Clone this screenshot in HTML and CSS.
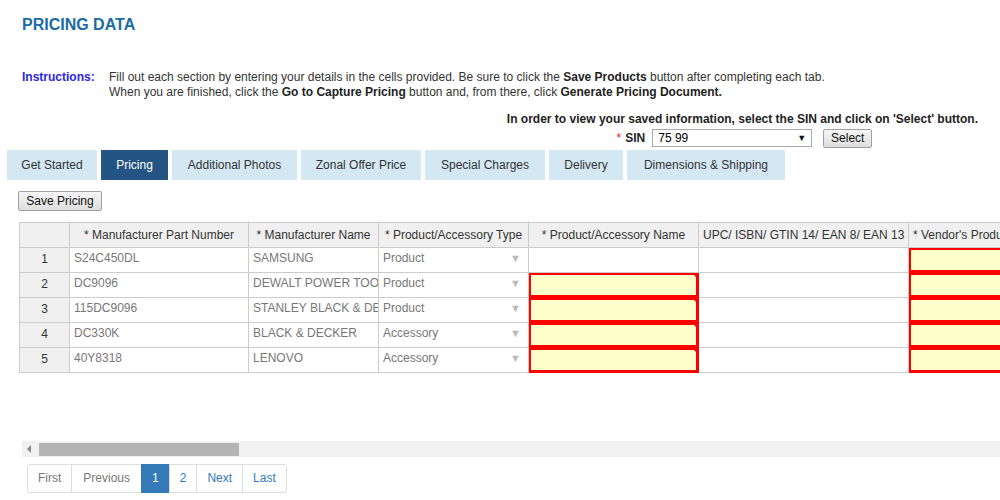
FILE: index.html
```html
<!DOCTYPE html>
<html>
<head>
<meta charset="utf-8">
<link rel="stylesheet" href="styles.css">
</head>
<body>
<h1 class="title">PRICING DATA</h1>
<div class="instructions">
  <span class="label">Instructions:</span>
  <div class="itext">Fill out each section by entering your details in the cells provided. Be sure to click the <b>Save Products</b> button after completing each tab.<br>When you are finished, click the <b>Go to Capture Pricing</b> button and, from there, click <b>Generate Pricing Document.</b></div>
</div>
<div class="sin-area">
  <div class="sin-box">
    <div class="sin-note">In order to view your saved information, select the SIN and click on 'Select' button.</div>
    <div class="sin-row">
      <span class="req">*</span><b class="sin-label">SIN</b>
      <span class="select"><span>75 99</span><span class="sel-arrow">▼</span></span>
      <button class="btn-select">Select</button>
    </div>
  </div>
</div>
<div class="tabs">
  <div class="tab t1">Get Started</div>
  <div class="tab t2 active">Pricing</div>
  <div class="tab t3">Additional Photos</div>
  <div class="tab t4">Zonal Offer Price</div>
  <div class="tab t5">Special Charges</div>
  <div class="tab t6">Delivery</div>
  <div class="tab t7">Dimensions &amp; Shipping</div>
</div>
<button class="btn-save">Save Pricing</button>
<div class="grid-wrap">
  <table class="grid">
    <colgroup>
      <col class="c0"><col class="c1"><col class="c2"><col class="c3"><col class="c4"><col class="c5"><col class="c6">
    </colgroup>
    <thead>
      <tr><th></th><th>* Manufacturer Part Number</th><th>* Manufacturer Name</th><th>* Product/Accessory Type</th><th>* Product/Accessory Name</th><th>UPC/ ISBN/ GTIN 14/ EAN 8/ EAN 13</th><th class="left">* Vendor's Product Name</th></tr>
    </thead>
    <tbody>
      <tr><th>1</th><td>S24C450DL</td><td>SAMSUNG</td><td class="dd"><span class="dd-text">Product</span><span class="dd-arrow">▼</span></td><td></td><td></td><td class="inv"></td></tr>
      <tr><th>2</th><td>DC9096</td><td>DEWALT POWER TOOLS</td><td class="dd"><span class="dd-text">Product</span><span class="dd-arrow">▼</span></td><td class="inv"></td><td></td><td class="inv"></td></tr>
      <tr><th>3</th><td>115DC9096</td><td>STANLEY BLACK &amp; DECKER</td><td class="dd"><span class="dd-text">Product</span><span class="dd-arrow">▼</span></td><td class="inv"></td><td></td><td class="inv"></td></tr>
      <tr><th>4</th><td>DC330K</td><td>BLACK &amp; DECKER</td><td class="dd"><span class="dd-text">Accessory</span><span class="dd-arrow">▼</span></td><td class="inv"></td><td></td><td class="inv"></td></tr>
      <tr><th>5</th><td>40Y8318</td><td>LENOVO</td><td class="dd"><span class="dd-text">Accessory</span><span class="dd-arrow">▼</span></td><td class="inv"></td><td></td><td class="inv"></td></tr>
    </tbody>
  </table>
</div>
<div class="hscroll"><span class="hs-arrow"></span><div class="hs-thumb"></div></div>
<ul class="pager">
  <li class="disabled">First</li>
  <li class="disabled">Previous</li>
  <li class="current">1</li>
  <li>2</li>
  <li>Next</li>
  <li>Last</li>
</ul>
</body>
</html>
```
FILE: styles.css
```css
html, body {
  margin: 0;
  padding: 0;
  background: #fff;
}
body {
  width: 1000px;
  height: 500px;
  overflow: hidden;
  font-family: "Liberation Sans", Arial, sans-serif;
  font-size: 12px;
  color: #333;
}
.title {
  margin: 16px 0 0 22px;
  font-size: 16px;
  line-height: 18px;
  font-weight: bold;
  color: #1b6aa5;
}
.instructions {
  display: flex;
  margin: 36px 0 0 22px;
  line-height: 15px;
}
.instructions .label {
  width: 87px;
  flex: none;
  font-weight: bold;
  color: #2828e6;
}
.itext b {
  color: #222;
}
.sin-area {
  display: flex;
  justify-content: flex-end;
  padding-right: 22px;
  margin-top: 12px;
}
.sin-box {
  text-align: center;
}
.sin-note {
  font-weight: bold;
  color: #222;
  line-height: 15px;
}
.sin-row {
  display: flex;
  justify-content: center;
  align-items: center;
  height: 20px;
  margin-top: 1px;
  padding-left: 4px;
}
.req {
  color: #e02020;
  margin-right: 4px;
}
.sin-label {
  color: #222;
  margin-right: 7px;
}
.select {
  display: flex;
  justify-content: space-between;
  align-items: center;
  box-sizing: border-box;
  width: 160px;
  height: 18px;
  border: 1px solid #a9a9a9;
  padding: 0 5px 0 5px;
  color: #000;
  text-align: left;
  background: #fff;
}
.sel-arrow {
  font-size: 9px;
  color: #111;
}
.btn-select {
  margin-left: 11px;
  box-sizing: border-box;
  height: 19px;
  width: 49px;
  padding: 0;
  font-family: "Liberation Sans", Arial, sans-serif;
  font-size: 12px;
  color: #111;
  border: 1px solid #a0a0a0;
  border-radius: 2px;
  background: linear-gradient(#f6f6f6, #dedede);
}
.tabs {
  display: flex;
  gap: 4px;
  margin: 2px 0 0 7px;
}
.tab {
  flex: none;
  height: 30px;
  line-height: 30px;
  text-align: center;
  background: #d4e8f4;
  color: #333;
}
.t1 { width: 90px; }
.t2 { width: 67px; }
.t3 { width: 125px; }
.t4 { width: 120px; }
.t5 { width: 120px; }
.t6 { width: 74px; }
.t7 { width: 158px; }
.tab.active {
  background: #245483;
  color: #fff;
}
.btn-save {
  display: block;
  margin: 11px 0 0 18px;
  box-sizing: border-box;
  height: 20px;
  width: 84px;
  padding: 0;
  font-family: "Liberation Sans", Arial, sans-serif;
  font-size: 12px;
  color: #111;
  border: 1px solid #a0a0a0;
  border-radius: 2px;
  background: linear-gradient(#f6f6f6, #dedede);
}
.grid-wrap {
  margin: 11px 0 0 19px;
  width: 981px;
  height: 219px;
  overflow: hidden;
}
.grid {
  table-layout: fixed;
  border-collapse: collapse;
  width: 1090px;
}
.c0 { width: 50px; }
.c1 { width: 179px; }
.c2 { width: 130px; }
.c3 { width: 150px; }
.c4 { width: 170px; }
.c5 { width: 210px; }
.c6 { width: 201px; }
.grid tr {
  height: 25px;
}
.grid th, .grid td {
  border: 1px solid #ccc;
  height: auto;
  padding: 0 4px;
  line-height: 20px;
  vertical-align: top;
  white-space: nowrap;
  overflow: hidden;
  font-size: 12px;
}
.grid th {
  background: #f0f0f0;
  font-weight: normal;
  color: #333;
  text-align: center;
  vertical-align: middle;
}
.grid th.left {
  text-align: left;
}
.grid tbody th {
  line-height: 22px;
  vertical-align: top;
}
.grid td {
  color: #777;
  position: relative;
}
.dd-text {
  display: inline-block;
  vertical-align: top;
  width: 120px;
  overflow: hidden;
}
.dd-arrow {
  position: absolute;
  right: 7px;
  top: 0;
  font-size: 11px;
  line-height: 20px;
  color: #bbb;
}
.grid td.inv {
  background: #ffffcc;
  box-shadow: inset 0 0 0 2px #ff0000;
  border-color: #ff0000;
}
.grid td.inv::after {
  content: "";
  position: absolute;
  top: 0;
  right: 0;
  width: 0;
  height: 0;
  border-top: 6px solid #ff0000;
  border-left: 6px solid transparent;
}
.hscroll {
  display: flex;
  align-items: center;
  margin-left: 22px;
  width: 978px;
  height: 16px;
  background: #f1f1f1;
}
.hs-arrow {
  width: 0;
  height: 0;
  margin-left: 5px;
  border-right: 4px solid #888;
  border-top: 4px solid transparent;
  border-bottom: 4px solid transparent;
}
.hs-thumb {
  margin-left: 8px;
  width: 200px;
  height: 13px;
  background: #b4b4b4;
}
.pager {
  display: flex;
  list-style: none;
  margin: 7px 0 0 27px;
  padding: 0;
}
.pager li {
  height: 27px;
  line-height: 27px;
  padding: 0 10px;
  border: 1px solid #ddd;
  margin-left: -1px;
  color: #337ab7;
  background: #fff;
  font-size: 12px;
}
.pager li:first-child {
  margin-left: 0;
  border-radius: 3px 0 0 3px;
}
.pager li:last-child {
  border-radius: 0 3px 3px 0;
}
.pager li.disabled {
  color: #777;
}
.pager li:nth-child(2) {
  padding: 0 11px;
}
.pager li.current {
  background: #337ab7;
  border-color: #337ab7;
  color: #fff;
}
```
